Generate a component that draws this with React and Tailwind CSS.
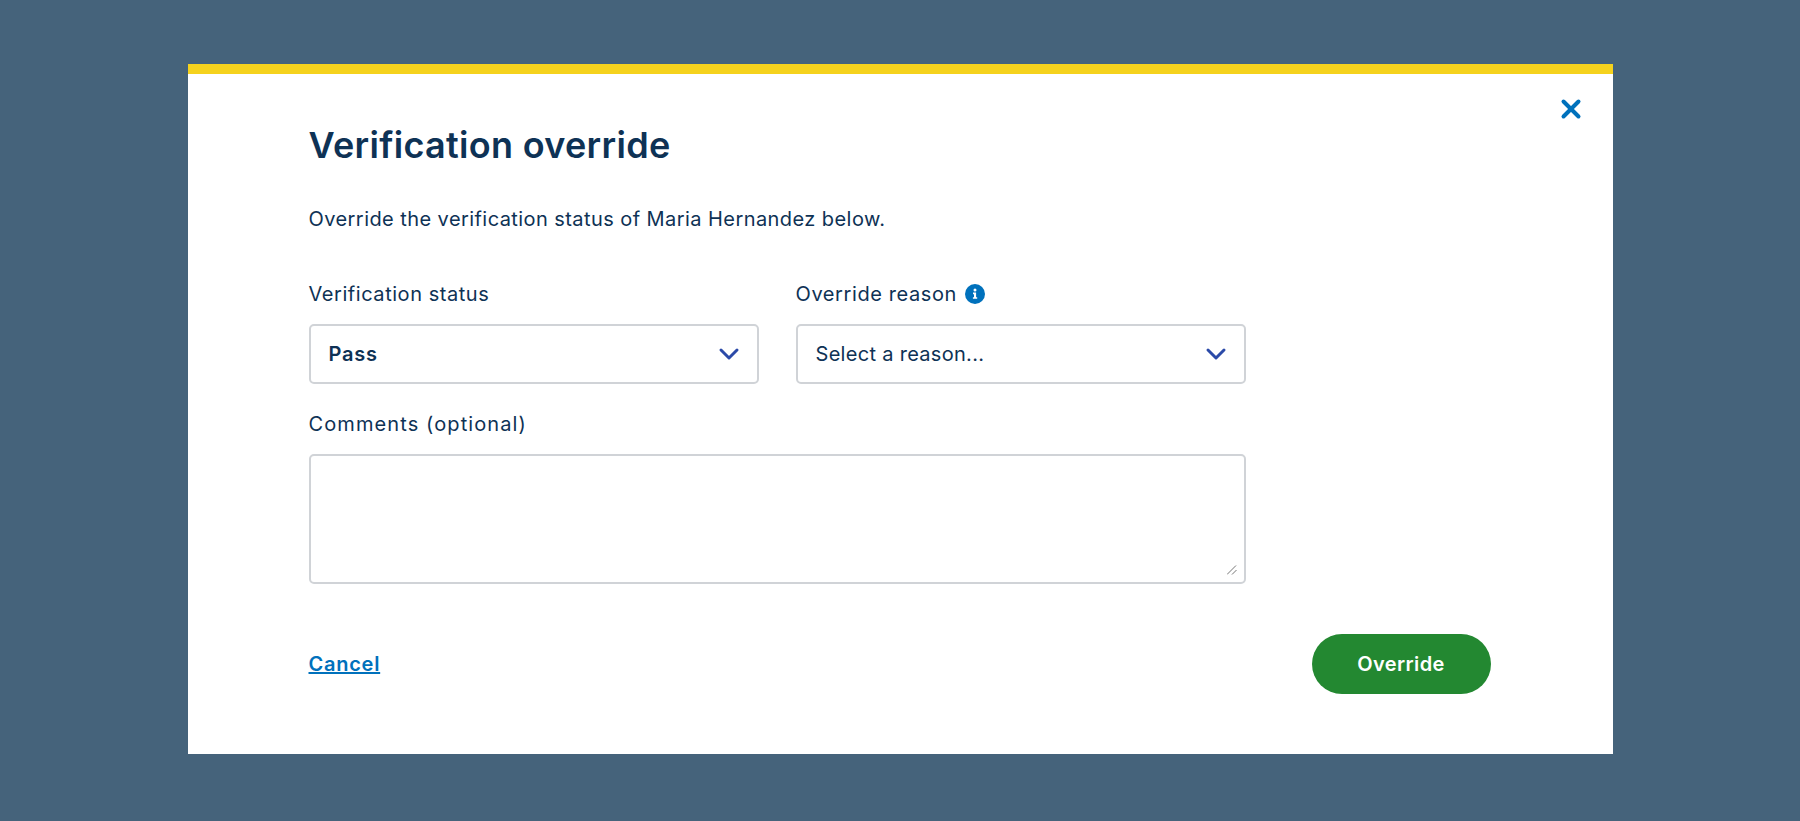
import React from 'react';
import { ChevronDown, X } from 'lucide-react';

const Select = ({ value, bold }) => (
  <button
    type="button"
    className="flex h-[60px] w-[450px] items-center justify-between rounded-[5px] border-2 border-[#d0d3d7] bg-white pl-[18px] pr-[12px] text-[#0e3255]"
  >
    <span className={bold ? "text-[20px] font-semibold tracking-[0.75px]" : "text-[20px] tracking-[0.3px]"}>{value}</span>
    <ChevronDown className="h-[32px] w-[32px] text-[#2b4aa8]" strokeWidth={2.25} />
  </button>
);

const App = () => {
  return (
    <div className="flex h-screen justify-center overflow-hidden bg-[#45637b] pt-[64px] font-['Inter',sans-serif]">
      <div className="relative h-[690px] w-[1425px] border-t-[10px] border-[#f5d21d] bg-white pl-[121px] pr-[122px] pt-[49px]">
        <button type="button" className="absolute right-[27px] top-[20px] text-[#0071bc]">
          <X className="h-[30px] w-[30px]" strokeWidth={3.2} />
        </button>

        <h1 className="text-[36px] font-semibold leading-[44px] tracking-[0.3px] text-[#0e3255]">Verification override</h1>
        <p className="mt-[38px] text-[20px] leading-[28px] tracking-[0.43px] text-[#0e3255]">
          Override the verification status of Maria Hernandez below.
        </p>

        <div className="mt-[47px] flex w-[937px] justify-between">
          <div>
            <label className="mb-[16px] block text-[20px] leading-[28px] tracking-[0.55px] text-[#0e3255]">Verification status</label>
            <Select value="Pass" bold />
          </div>
          <div>
            <label className="mb-[16px] flex items-center gap-[8px] text-[20px] leading-[28px] tracking-[0.6px] text-[#0e3255]">
              Override reason
              <svg viewBox="0 0 20 20" className="h-[20px] w-[20px]">
                <circle cx="10" cy="10" r="10" fill="#0071bc" />
                <circle cx="10" cy="6" r="1.5" fill="#fff" />
                <path d="M8 8.6h3.1v4.6h1.1v1.6H7.9v-1.6h1.1v-3H8z" fill="#fff" />
              </svg>
            </label>
            <Select value="Select a reason..." />
          </div>
        </div>

        <label className="mt-[26px] mb-[16px] block text-[20px] leading-[28px] tracking-[1.1px] text-[#0e3255]">Comments (optional)</label>
        <div className="relative w-[937px]">
          <textarea className="block h-[130px] w-full resize-none rounded-[5px] border-2 border-[#d0d3d7] bg-white" />
          <svg viewBox="0 0 10 10" className="absolute bottom-[9px] right-[9px] h-[10px] w-[10px]" stroke="#777" strokeWidth="1">
            <path d="M0 9.5 9 .5" />
            <path d="M5 9.5 9.5 5" />
          </svg>
        </div>

        <div className="mt-[50px] flex items-center justify-between">
          <a href="#" className="text-[20px] font-semibold tracking-[0.75px] text-[#0071bc] underline">Cancel</a>
          <button type="button" className="h-[60px] w-[179px] rounded-full bg-[#238831] text-[20px] font-semibold tracking-[0.4px] text-white">
            Override
          </button>
        </div>
      </div>
    </div>
  );
};

export default App;
